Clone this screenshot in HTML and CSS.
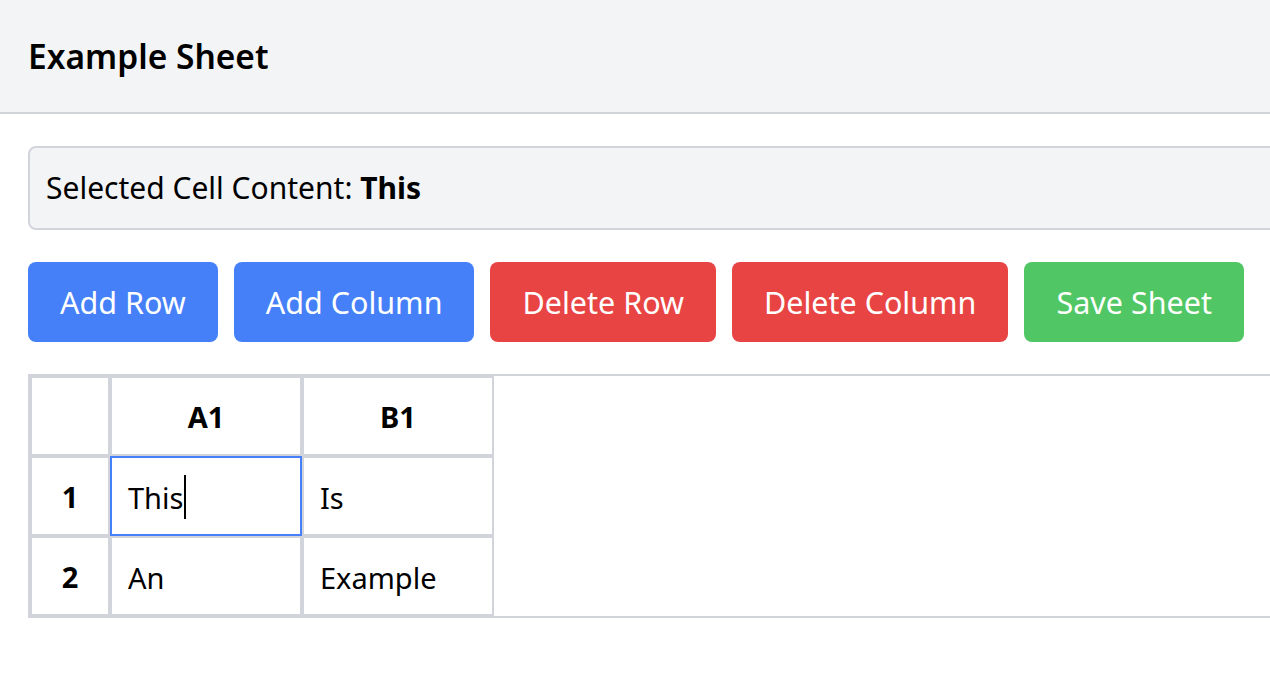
FILE: index.html
```html
<!DOCTYPE html>
<html lang="en">
<head>
<meta charset="utf-8">
<title>Example Sheet</title>
<link rel="stylesheet" href="styles.css">
</head>
<body>
<div class="page">
  <header class="topbar">
    <h1 class="title">Example Sheet</h1>
  </header>
  <main class="content">
    <div class="selected">Selected Cell Content: <strong>This</strong></div>
    <div class="toolbar">
      <button class="btn btn-blue">Add Row</button>
      <button class="btn btn-blue">Add Column</button>
      <button class="btn btn-red">Delete Row</button>
      <button class="btn btn-red">Delete Column</button>
      <button class="btn btn-green">Save Sheet</button>
    </div>
    <div class="grid-wrap">
      <table class="grid">
        <thead>
          <tr>
            <th class="corner"></th>
            <th class="colhead">A1</th>
            <th class="colhead">B1</th>
          </tr>
        </thead>
        <tbody>
          <tr>
            <th class="rowhead">1</th>
            <td><div class="cell cell-focus">This<span class="caret"></span></div></td>
            <td><div class="cell">Is</div></td>
          </tr>
          <tr>
            <th class="rowhead">2</th>
            <td><div class="cell">An</div></td>
            <td><div class="cell">Example</div></td>
          </tr>
        </tbody>
      </table>
    </div>
  </main>
</div>
</body>
</html>
```

FILE: styles.css
```css
html, body {
  margin: 0;
  padding: 0;
  overflow: hidden;
  background: #ffffff;
}

.page {
  width: 1340px;
  font-family: "Noto Sans", "Open Sans", "DejaVu Sans", sans-serif;
  color: #000000;
}

.topbar {
  background: #f3f4f6;
  border-bottom: 2px solid #d1d5db;
  height: 112px;
  display: flex;
  align-items: center;
  padding: 0 28px;
}

.title {
  margin: 0;
  font-size: 33.5px;
  font-weight: 600;
  line-height: 56px;
}

.content {
  padding: 32px 28px;
  display: flex;
  flex-direction: column;
  gap: 32px;
}

.selected {
  background: #f3f4f6;
  border: 2px solid #d1d5db;
  border-radius: 8px;
  padding: 12px 16px;
  font-size: 30px;
  line-height: 56px;
  height: 56px;
}

.selected strong {
  font-weight: 700;
}

.toolbar {
  display: flex;
  gap: 16px;
}

.btn {
  font-family: inherit;
  font-size: 30.5px;
  line-height: 48px;
  padding: 16px 32px;
  border: none;
  border-radius: 8px;
  color: #ffffff;
  cursor: pointer;
}

.btn-blue { background: #4580f8; }
.btn-red { background: #e84444; }
.btn-green { background: #50c764; }

.grid-wrap {
  border-top: 2px solid #d1d5db;
  border-bottom: 2px solid #d1d5db;
  border-left: 2px solid #d1d5db;
}

.grid {
  border-collapse: separate;
  border-spacing: 0;
}

.grid th {
  border: 2px solid #d1d5db;
  height: 76px;
  padding: 0;
  font-size: 29px;
  font-weight: 700;
  text-align: center;
}

.corner, .rowhead {
  width: 76px;
}

.colhead {
  width: 188px;
}

.grid td {
  padding: 0;
}

.cell {
  box-sizing: border-box;
  width: 192px;
  height: 80px;
  border: 2px solid #d1d5db;
  padding: 4px 16px 0;
  font-size: 29px;
  line-height: 80px;
  display: flex;
  align-items: center;
}

.cell-focus {
  border-color: #4580f8;
}

.caret {
  display: inline-block;
  width: 2px;
  height: 44px;
  background: #000000;
  margin-left: 1px;
  margin-top: -2px;
}
```
